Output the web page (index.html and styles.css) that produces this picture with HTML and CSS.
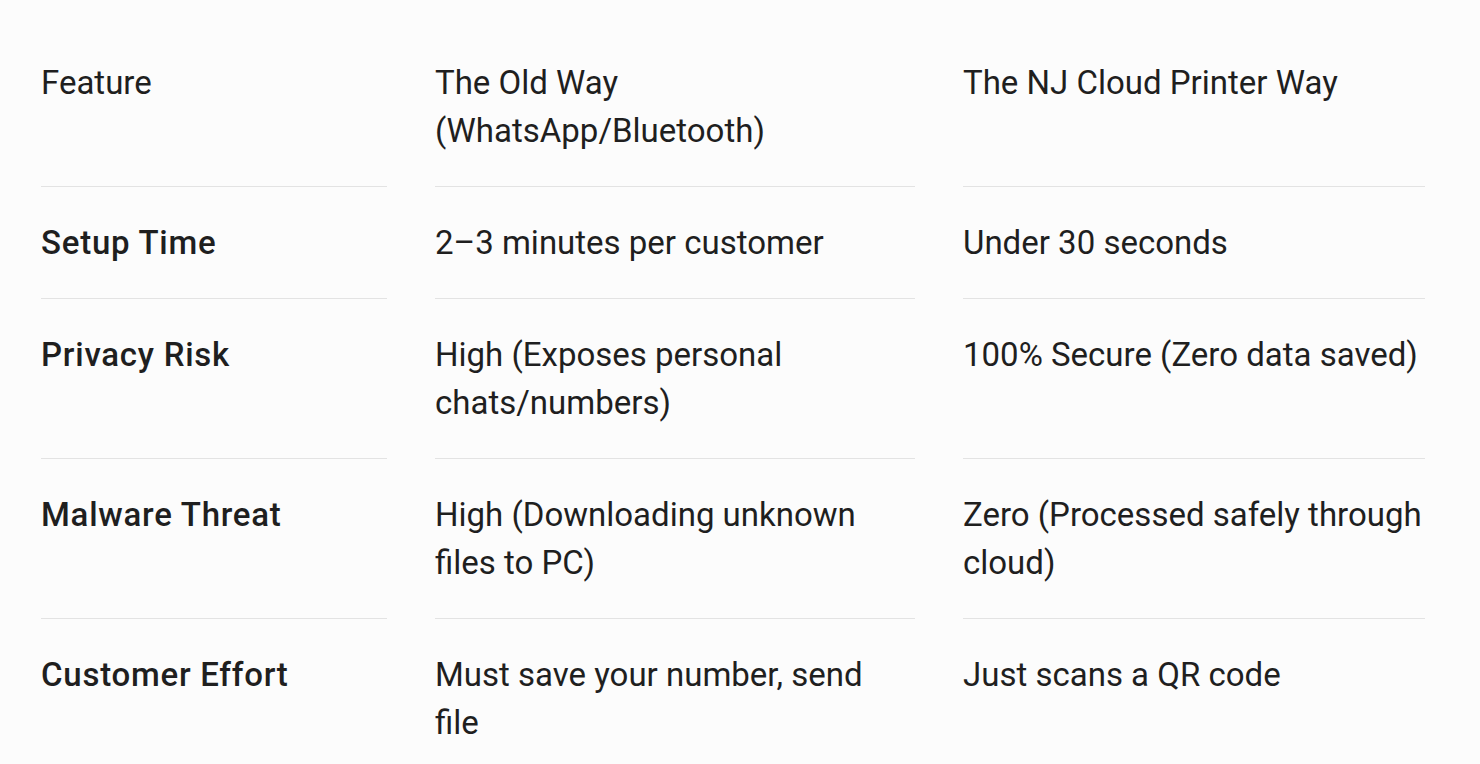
FILE: index.html
```html
<!DOCTYPE html>
<html lang="en">
<head>
  <meta charset="UTF-8" />
  <meta name="viewport" content="width=device-width, initial-scale=1.0"/>
  <title>Comparison</title>
  <link rel="stylesheet" href="styles.css">
</head>
<body>
  <div class="compare">
    <div class="cell head">Feature</div>
    <div class="cell head">The Old Way (WhatsApp/Bluetooth)</div>
    <div class="cell head">The NJ Cloud Printer Way</div>

    <div class="cell label">Setup Time</div>
    <div class="cell">2–3 minutes per customer</div>
    <div class="cell">Under 30 seconds</div>

    <div class="cell label">Privacy Risk</div>
    <div class="cell">High (Exposes personal chats/numbers)</div>
    <div class="cell">100% Secure (Zero data saved)</div>

    <div class="cell label">Malware Threat</div>
    <div class="cell">High (Downloading unknown files to PC)</div>
    <div class="cell">Zero (Processed safely through cloud)</div>

    <div class="cell label last">Customer Effort</div>
    <div class="cell last">Must save your number, send file</div>
    <div class="cell last">Just scans a QR code</div>
  </div>
</body>
</html>
```

FILE: styles.css
```css
body {
  margin: 0;
  background-color: #fcfcfc;
  color: #1f1f1f;
  font-family: 'Roboto', 'Open Sans', sans-serif;
}

.compare {
  display: grid;
  grid-template-columns: 346px 480px 462px;
  column-gap: 48px;
  padding: 27px 0 0 41px;
}

.cell {
  font-size: 33px;
  line-height: 48px;
  padding: 32px 2px 31px 0;
  border-bottom: 1px solid #e3e3e3;
}

.label {
  font-weight: 500;
  letter-spacing: 0.75px;
}

.last {
  border-bottom: none;
}
```
